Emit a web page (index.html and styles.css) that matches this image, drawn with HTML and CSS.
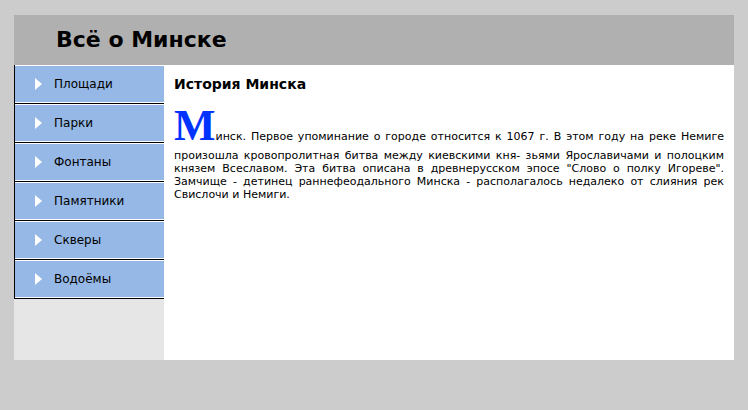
FILE: index.html
```html
<!DOCTYPE html>
<html lang="ru">
<head>
<meta charset="utf-8">
<title>Всё о Минске</title>
<link rel="stylesheet" href="styles.css">
</head>
<body>
<div class="page">
  <header class="header"><h1 class="title">Всё о Минске</h1></header>
  <div class="main">
    <nav class="sidebar">
      <ul class="menu">
        <li class="menu-item"><a class="menu-link" href="#"><span class="arrow"></span>Площади</a></li>
        <li class="menu-item"><a class="menu-link" href="#"><span class="arrow"></span>Парки</a></li>
        <li class="menu-item"><a class="menu-link" href="#"><span class="arrow"></span>Фонтаны</a></li>
        <li class="menu-item"><a class="menu-link" href="#"><span class="arrow"></span>Памятники</a></li>
        <li class="menu-item"><a class="menu-link" href="#"><span class="arrow"></span>Скверы</a></li>
        <li class="menu-item"><a class="menu-link" href="#"><span class="arrow"></span>Водоёмы</a></li>
      </ul>
    </nav>
    <main class="content">
      <h2 class="heading">История Минска</h2>
      <p class="text"><span class="dropcap">М</span>инск. Первое упоминание о городе относится к 1067 г. В этом году на реке Немиге произошла кровопролитная битва между киевскими кня- зьями Ярославичами и полоцким князем Всеславом. Эта битва описана в древнерусском эпосе "Слово о полку Игореве". Замчище - детинец раннефеодального Минска - располагалось недалеко от слияния рек Свислочи и Немиги.</p>
    </main>
  </div>
</div>
</body>
</html>
```
FILE: styles.css
```css
html, body {
  margin: 0;
  padding: 0;
  background: #cccccc;
}
.page {
  width: 720px;
  margin: 15px 14px;
  font-family: "DejaVu Sans", Verdana, sans-serif;
}
.header {
  background: #b0b0b0;
  height: 50px;
  padding-left: 42px;
}
.title {
  margin: 0;
  font-size: 22px;
  font-weight: bold;
  line-height: 50px;
  color: #000;
}
.main {
  display: flex;
  height: 295px;
}
.sidebar {
  width: 150px;
  background: #e6e6e6;
  flex: none;
}
.menu {
  list-style: none;
  margin: 0;
  padding: 0;
}
.menu-item {
  border-left: 1px solid #000;
  border-bottom: 1px solid #000;
}
.menu-link {
  display: flex;
  align-items: center;
  height: 36px;
  border-top: 1px solid #fff;
  border-bottom: 1px solid #fff;
  background: #95b8e6;
  padding-left: 20px;
  color: #000;
  text-decoration: none;
  font-size: 12px;
}
.arrow {
  width: 0;
  height: 0;
  border-top: 6px solid transparent;
  border-bottom: 6px solid transparent;
  border-left: 7px solid #fff;
  margin-right: 12px;
}
.content {
  flex: 1;
  background: #fff;
  padding: 9px 10px 0 10px;
}
.heading {
  margin: 0 0 9px 0;
  font-size: 14px;
  font-weight: bold;
  line-height: 20px;
}
.text {
  margin: 0;
  font-size: 11px;
  line-height: 13px;
  text-align: justify;
  color: #000;
}
.dropcap {
  font-family: "Liberation Serif", "Times New Roman", serif;
  font-weight: bold;
  font-size: 44px;
  line-height: 46px;
  color: #0033ff;
}
```
